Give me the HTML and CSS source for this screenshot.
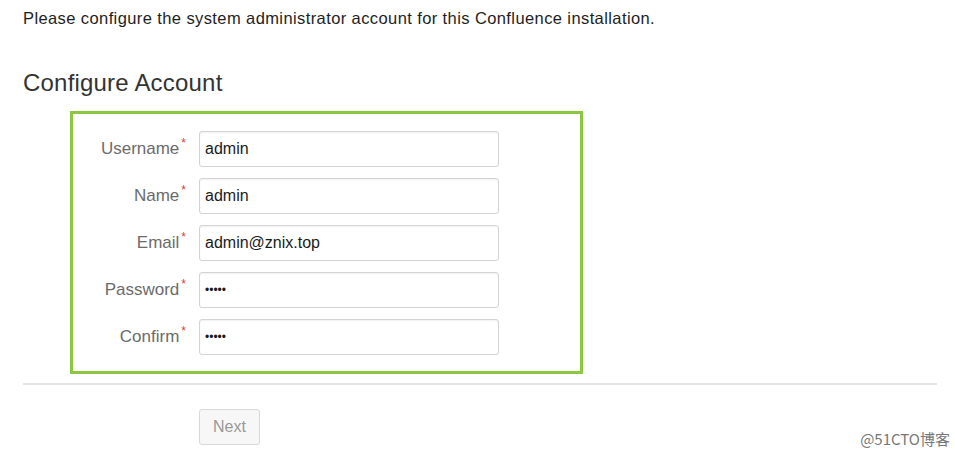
FILE: index.html
```html
<!DOCTYPE html>
<html lang="en">
<head>
    <meta charset="UTF-8">
    <title>Configure Account</title>
    <link rel="stylesheet" href="styles.css">
</head>
<body>
    <div class="page">
        <p class="intro">Please configure the system administrator account for this Confluence installation.</p>
        <h2>Configure Account</h2>
        <form class="account-box">
            <div class="row">
                <label>Username<span class="req">*</span></label>
                <div class="field">admin</div>
            </div>
            <div class="row">
                <label>Name<span class="req">*</span></label>
                <div class="field">admin</div>
            </div>
            <div class="row">
                <label>Email<span class="req">*</span></label>
                <div class="field">admin@znix.top</div>
            </div>
            <div class="row">
                <label>Password<span class="req">*</span></label>
                <div class="field dots">&bull;&bull;&bull;&bull;&bull;</div>
            </div>
            <div class="row">
                <label>Confirm<span class="req">*</span></label>
                <div class="field dots">&bull;&bull;&bull;&bull;&bull;</div>
            </div>
        </form>
        <div class="divider"></div>
        <div class="buttons">
            <button class="next-button" type="button">Next</button>
        </div>
    </div>
    <div class="watermark">@51CTO博客</div>
</body>
</html>
```

FILE: styles.css
```css
body {
    margin: 0;
    padding: 0;
    background: #ffffff;
    font-family: "Liberation Sans", Arial, sans-serif;
    color: #333;
}
.page {
    padding: 8px 18px 0 23px;
}
.intro {
    margin: 0;
    font-size: 16.5px;
    letter-spacing: 0.4px;
    line-height: 20px;
    color: #1e1e1e;
}
h2 {
    margin: 40px 0 0 0;
    font-size: 24px;
    letter-spacing: 0.2px;
    font-weight: normal;
    line-height: 30px;
    color: #333;
}
.account-box {
    margin: 13px 0 0 47px;
    width: 507px;
    border: 3px solid #8dc63f;
    padding: 17px 0 16px 0;
    display: flex;
    flex-direction: column;
    gap: 11px;
}
.row {
    display: flex;
    align-items: center;
}
.row label {
    width: 115px;
    text-align: right;
    font-size: 17px;
    color: #6b6b6b;
    padding-right: 2px;
    box-sizing: border-box;
}
.req {
    color: #d04437;
    font-size: 12px;
    position: relative;
    top: -7px;
    margin-left: 2px;
}
.field {
    margin-left: 11px;
    width: 300px;
    height: 36px;
    box-sizing: border-box;
    border: 1px solid #d3d3d3;
    border-radius: 3px;
    box-shadow: inset 0 1px 2px rgba(0, 0, 0, 0.06);
    padding: 0 5px;
    display: flex;
    align-items: center;
    font-size: 16px;
    color: #1a1a1a;
}
.dots {
    font-size: 12px;
}
.divider {
    margin-top: 9px;
    height: 2px;
    background: #e6e6e6;
}
.buttons {
    padding: 24px 0 0 176px;
}
.next-button {
    width: 61px;
    height: 36px;
    border: 1px solid #d8d8d8;
    border-radius: 3px;
    background: #f7f7f7;
    color: #999;
    font-family: "Liberation Sans", Arial, sans-serif;
    font-size: 16px;
}
.watermark {
    position: absolute;
    right: 5px;
    top: 428px;
    font-family: "Noto Sans CJK SC", sans-serif;
    font-size: 15px;
    color: #777;
}
```
